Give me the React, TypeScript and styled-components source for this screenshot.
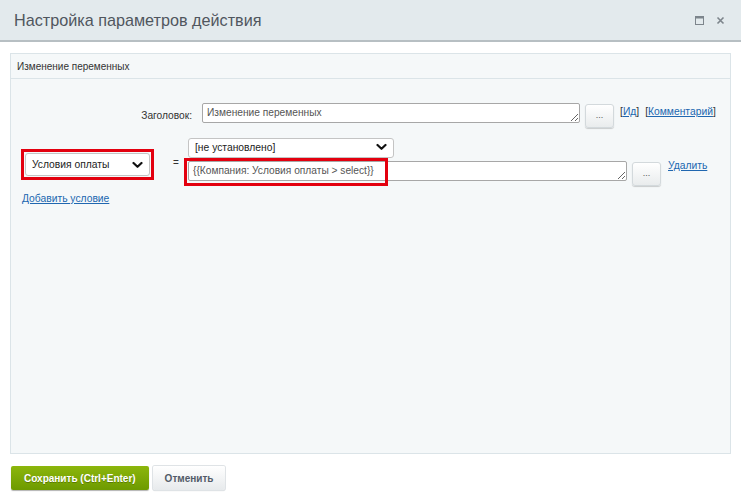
import styled, { createGlobalStyle } from "styled-components";

const Global = createGlobalStyle`
  html, body { margin: 0; padding: 0; background: #fff; }
  body { font-family: "Liberation Sans", Arial, sans-serif; }
  * { box-sizing: border-box; }
`;

// окно диалога
const Dialog = styled.div`
  width: 741px;
  height: 502px;
  display: flex;
  flex-direction: column;
  background: #fff;
`;

const Header = styled.div`
  height: 42px;
  flex: none;
  display: flex;
  align-items: center;
  justify-content: space-between;
  padding: 0 14px 0 14px;
  background: #e3eaed;
  border-bottom: 2px solid #b7bfc3;
`;

const Title = styled.div`
  font-size: 16.2px;
  color: #50565e;
`;

const HeaderIcons = styled.div`
  display: flex;
  align-items: center;
  gap: 12px;
  padding-right: 2px;
`;

const Content = styled.div`
  flex: 1;
  padding: 11px 10px 0 10px;
  display: flex;
  flex-direction: column;
`;

const Panel = styled.div`
  flex: 1;
  display: flex;
  flex-direction: column;
  border: 1px solid #dbe4e8;
  background: #f5f8f9;
`;

const PanelHead = styled.div`
  height: 25px;
  display: flex;
  align-items: center;
  padding-left: 6px;
  font-size: 10px;
  color: #333;
  border-bottom: 1px solid #dbe4e8;
`;

const PanelBody = styled.div`
  padding: 24px 10px 0 10px;
`;

const TitleRow = styled.div`
  display: flex;
  align-items: flex-start;
`;

const Label = styled.div`
  width: 171px;
  text-align: right;
  margin-right: 10px;
  font-size: 10.2px;
  color: #333;
  line-height: 20px;
  padding-top: 3px;
`;

const Area = styled.textarea<{ $w: number }>`
  width: ${p => p.$w}px;
  height: 20px;
  min-height: 20px;
  resize: both;
  border: 1px solid #a7a7a7;
  border-radius: 2px;
  background: #fff;
  font-family: "Liberation Sans", Arial, sans-serif;
  font-size: 10.2px;
  color: #555;
  padding: 3px 4px;
  line-height: 12px;
  overflow: hidden;
  outline: none;
  display: block;
`;

const DotsButton = styled.button<{ $top: number }>`
  width: 29px;
  height: 24px;
  margin-left: 5px;
  margin-top: ${p => p.$top}px;
  border: 1px solid #d3d9dc;
  border-radius: 3px;
  background: linear-gradient(#ffffff, #e9eced);
  box-shadow: 0 1px 1px rgba(0, 0, 0, 0.18);
  font-size: 9px;
  color: #555;
  padding: 0 0 2px 0;
  font-family: "Liberation Sans", Arial, sans-serif;
`;

const Bracketed = styled.span<{ $gap: number }>`
  margin-left: ${p => p.$gap}px;
  font-size: 10.3px;
  color: #333;
  padding-top: 3px;
`;

const Link = styled.a`
  color: #2067b0;
  text-decoration: underline;
  font-size: 10.3px;
  cursor: pointer;
`;

const CondRow = styled.div`
  display: flex;
  align-items: flex-start;
  margin-top: 9px;
`;

const RedFrame = styled.div`
  border: 3px solid #e3000f;
  padding: 1px;
  margin-top: 12px;
`;

const SelectWrap = styled.div<{ $w: number; $h: number }>`
  position: relative;
  width: ${p => p.$w}px;
  height: ${p => p.$h}px;
`;

const Select = styled.select`
  appearance: none;
  width: 100%;
  height: 100%;
  border: 1px solid #c4c4c4;
  border-radius: 3px;
  background: #fff;
  font-family: "Liberation Sans", Arial, sans-serif;
  font-size: 10.3px;
  color: #222;
  padding: 0 6px;
  outline: none;
`;

const Chevron = styled.svg`
  position: absolute;
  right: 7px;
  top: 50%;
  transform: translateY(-50%);
  pointer-events: none;
`;

const Equals = styled.div`
  width: 34px;
  text-align: center;
  font-size: 10px;
  color: #333;
  padding-top: 20px;
  padding-left: 10px;
`;

const Fields = styled.div`
  display: flex;
  flex-direction: column;
  gap: 4px;
`;

const ExprLine = styled.div`
  display: flex;
  align-items: flex-start;
`;

const Highlight = styled.div`
  position: relative;
`;

const HighlightBox = styled.div`
  position: absolute;
  left: -4px;
  top: -3px;
  width: 204px;
  height: 28px;
  border: 3px solid #e3000f;
  pointer-events: none;
`;

const DeleteLink = styled(Link)`
  margin-left: 7px;
  margin-top: -1px;
`;

const AddLink = styled(Link)`
  display: inline-block;
  margin-top: 7px;
  margin-left: 1px;
`;

const Footer = styled.div`
  flex: none;
  display: flex;
  gap: 4px;
  padding: 12px 11px 12px 11px;
`;

const Btn = styled.button<{ $primary?: boolean }>`
  height: 24px;
  padding: 0 ${p => (p.$primary ? 13 : 12)}px;
  border-radius: 2px;
  font-family: "Liberation Sans", Arial, sans-serif;
  font-size: 10px;
  font-weight: bold;
  border: none;
  color: ${p => (p.$primary ? "#fff" : "#535c69")};
  background: ${p =>
    p.$primary
      ? "linear-gradient(#8cb60c, #6d9a00)"
      : "linear-gradient(#ffffff, #e7eaec)"};
  box-shadow: ${p =>
    p.$primary
      ? "0 1px 1px rgba(0,0,0,0.3)"
      : "0 0 0 1px #dfe3e6, 0 1px 1px rgba(0,0,0,0.2)"};
  text-shadow: ${p => (p.$primary ? "0 1px 0 rgba(0,0,0,0.25)" : "none")};
`;

const ChevronIcon = () => (
  <Chevron width="11" height="7" viewBox="0 0 11 7">
    <path d="M1.5 1.5 L5.5 5.3 L9.5 1.5" fill="none" stroke="#111" strokeWidth="2.2" strokeLinecap="round" strokeLinejoin="round" />
  </Chevron>
);

export default function App() {
  return (
    <Dialog>
      <Global />
      <Header>
        <Title>Настройка параметров действия</Title>
        <HeaderIcons>
          <svg width="9" height="9" viewBox="0 0 9 9">
            <rect x="0.5" y="0.5" width="8" height="8" fill="none" stroke="#7d858c" />
            <rect x="0.5" y="0.5" width="8" height="2" fill="#7d858c" />
          </svg>
          <svg width="9" height="9" viewBox="0 0 9 9">
            <path d="M1.5 1.5 L7.5 7.5 M7.5 1.5 L1.5 7.5" stroke="#7d858c" strokeWidth="1.6" />
          </svg>
        </HeaderIcons>
      </Header>

      <Content>
        <Panel>
          <PanelHead>Изменение переменных</PanelHead>
          <PanelBody>
            <TitleRow>
              <Label>Заголовок:</Label>
              <Area $w={378} defaultValue="Изменение переменных" />
              <DotsButton $top={1}>...</DotsButton>
              <Bracketed $gap={6}>[<Link>Ид</Link>]</Bracketed>
              <Bracketed $gap={6}>[<Link>Комментарий</Link>]</Bracketed>
            </TitleRow>

            <CondRow>
              <RedFrame>
                <SelectWrap $w={125} $h={23}>
                  <Select defaultValue="pay">
                    <option value="pay">Условия оплаты</option>
                  </Select>
                  <ChevronIcon />
                </SelectWrap>
              </RedFrame>
              <Equals>=</Equals>
              <Fields>
                <SelectWrap $w={206} $h={20}>
                  <Select defaultValue="none">
                    <option value="none">[не установлено]</option>
                  </Select>
                  <ChevronIcon />
                </SelectWrap>
                <ExprLine>
                  <Highlight>
                    <Area $w={439} defaultValue="{{Компания: Условия оплаты > select}}" />
                    <HighlightBox />
                  </Highlight>
                  <DotsButton $top={1}>...</DotsButton>
                  <DeleteLink>Удалить</DeleteLink>
                </ExprLine>
              </Fields>
            </CondRow>
            <AddLink>Добавить условие</AddLink>
          </PanelBody>
        </Panel>
      </Content>

      <Footer>
        <Btn $primary>Сохранить (Ctrl+Enter)</Btn>
        <Btn>Отменить</Btn>
      </Footer>
    </Dialog>
  );
}
